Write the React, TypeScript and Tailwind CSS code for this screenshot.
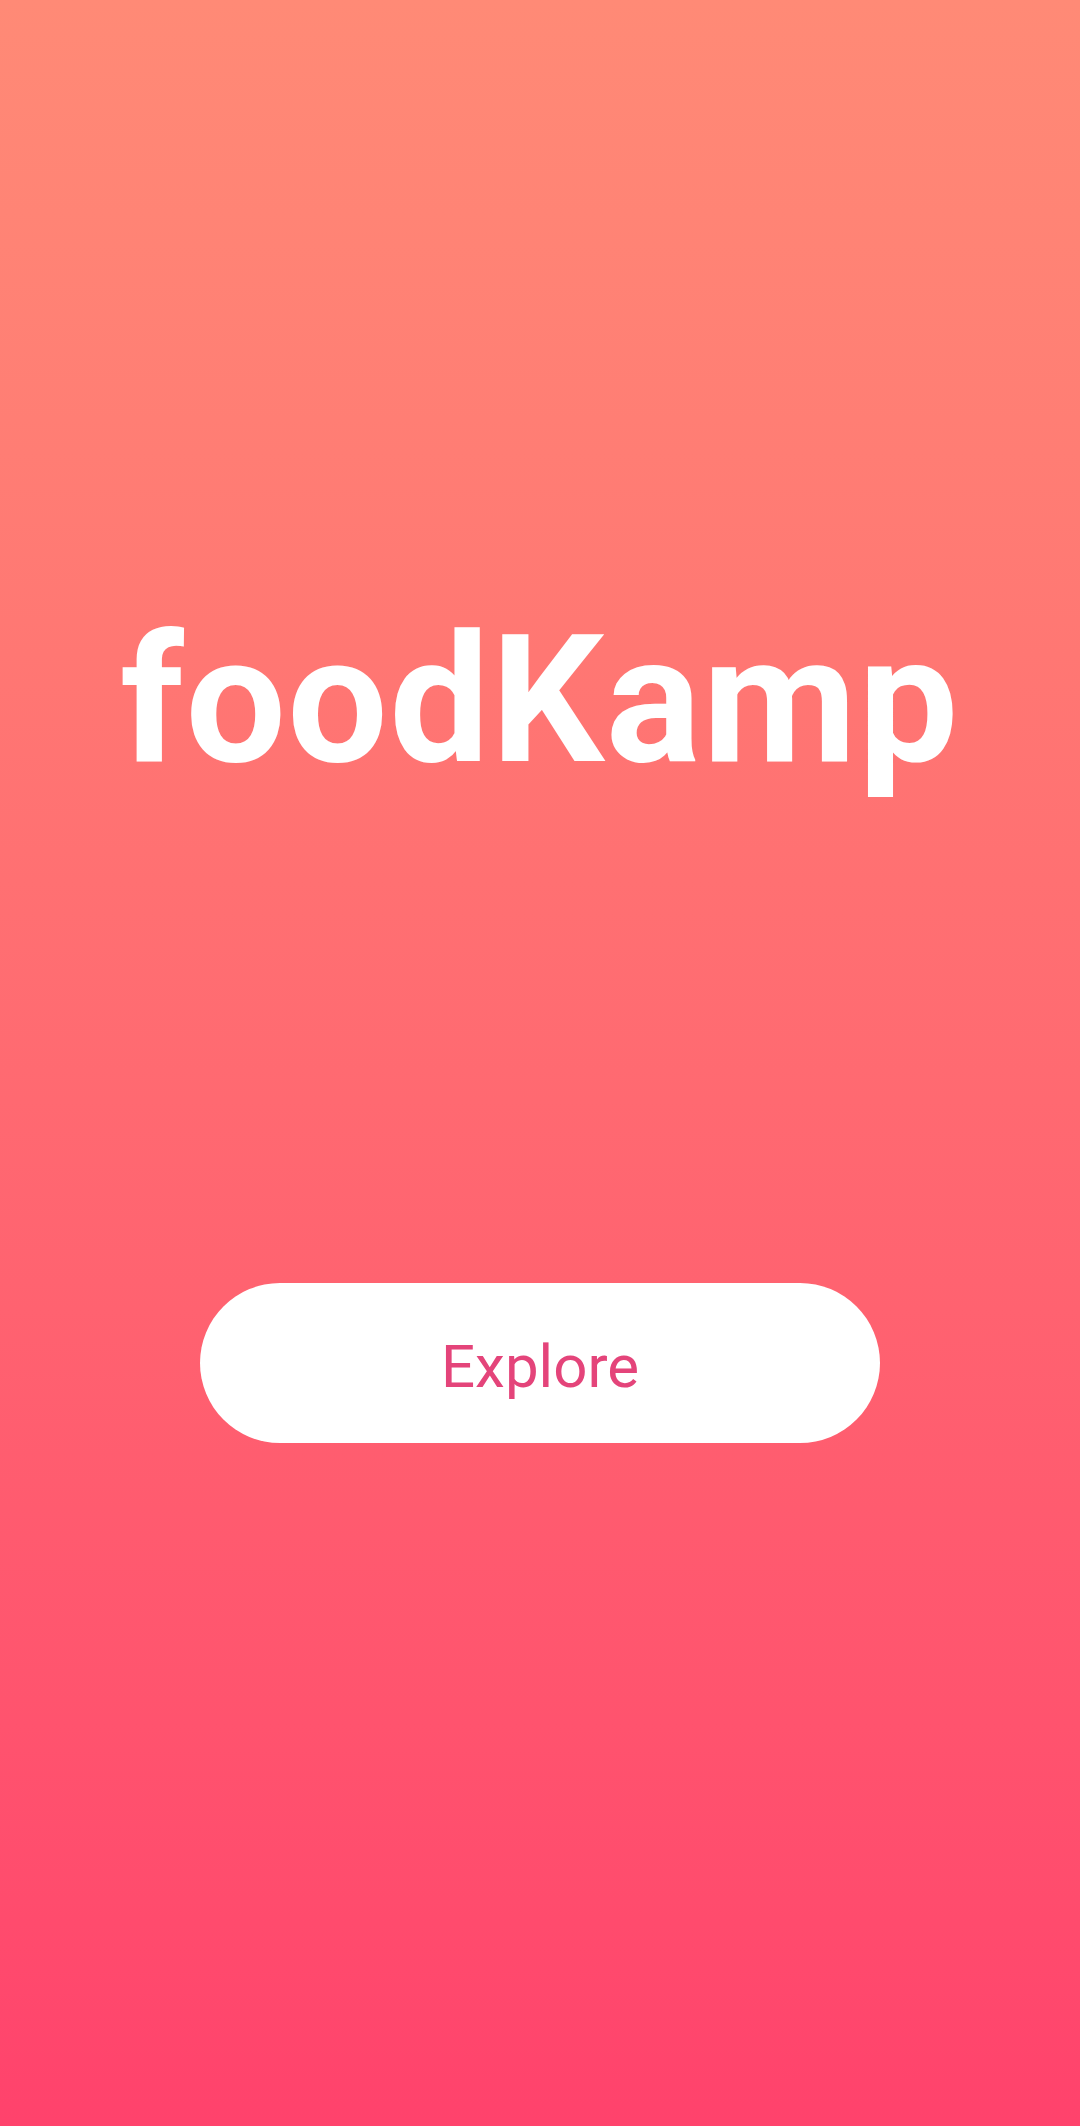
import React from 'react';

const App: React.FC = () => {
    return (
        <div
            className="flex h-[2126px] w-full flex-col items-center bg-gradient-to-b from-[#ff8a76] to-[#ff426c] pt-[611px]"
            style={{ fontFamily: 'Roboto, "Liberation Sans", sans-serif' }}
        >
            {/* Brand */}
            <h1 className="text-[178px] font-bold leading-none tracking-[1.5px] text-white">
                foodKamp
            </h1>

            {/* CTA */}
            <button className="mt-[494px] flex h-[160px] w-[680px] items-center justify-center rounded-full bg-white text-[60px] font-normal text-[#e4447a]">
                <span className="mt-[8px] block w-full text-center leading-none">Explore</span>
            </button>
        </div>
    );
};

export default App;
